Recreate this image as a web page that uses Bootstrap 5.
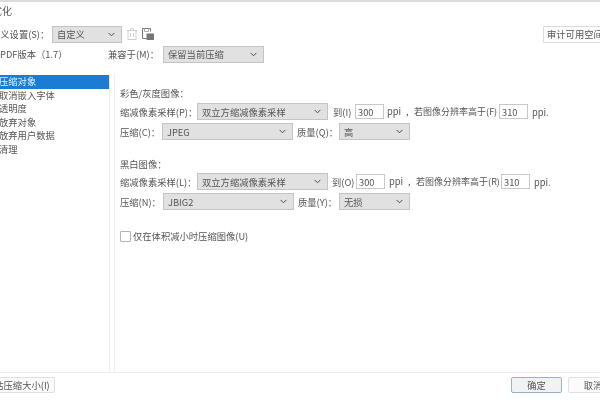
<!DOCTYPE html>
<html lang="zh"><head><meta charset="utf-8"><title>优化</title>
<link href="https://cdn.jsdelivr.net/npm/bootstrap@5.3.0/dist/css/bootstrap.min.css" rel="stylesheet">
<style>
html,body{margin:0;width:600px;height:400px;overflow:hidden;background:#fff}
body{font:9.3px/14px "Noto Sans CJK SC","Liberation Sans",sans-serif;color:#555}
.dlg{width:600px;height:400px;overflow:hidden;filter:blur(.55px)}
.topline{height:2px;background:#dcdcdc}
.ttl{height:15px;margin-left:-8px;padding-top:2px;font-size:10px}
.r1{height:18px;margin-top:8px}
.r2{height:16px;margin-top:3px}
.lb1{width:61px;margin-left:-9px;white-space:nowrap;flex:none}
.sel{appearance:none;display:block;flex:none;margin:0;padding:0 18px 0 4px;height:17px;min-height:0;font:inherit;line-height:14px;color:#555;background-color:#e1e1e1;background-size:9px 7px;background-position:right 5px center;border:1px solid #c4c4c4;border-radius:0;opacity:1}
.w70{width:70px}.w101{width:101px}.w131{width:131px}.w71{width:71px}
.ic1{margin-left:5px}.ic2{margin-left:5px}
.audit{margin-left:auto;width:70px;height:17px;margin-right:-13px;padding:0 0 0 3px;font-size:9.3px;line-height:14px;color:#555;background:#fdfdfd;border:1px solid #dcdcdc;border-radius:1px;white-space:nowrap;overflow:hidden;text-align:left;flex:none}
.ver{width:111px;margin-left:-3px;padding-left:3px;flex:none;white-space:nowrap;overflow:hidden}
.compat{width:55px;flex:none;white-space:nowrap}
.mainp{height:298px;margin-top:12px}
.leftp{width:110px;flex:none;border-right:1px solid #ededed;padding-top:1px}
.leftp .it{height:13.5px;line-height:13.5px;margin-left:-1px;white-space:nowrap;overflow:hidden}
.leftp .it.sel-it{background:#1b7cd3;color:#e8f2fb;margin-left:0;text-indent:-1px}
.rightp{margin-left:4px;width:486px;flex:none;border-left:1px solid #eee;padding:12px 0 0 5px}
.hd{height:14px;line-height:14px}
.fr{height:17px;margin-top:3px}
.fr.tight{margin-top:2px}
.lab{flex:none;white-space:nowrap}
.l77{width:77px}.l42{width:42px}.l43{width:43px}
.q{width:46px;padding-left:4px}
.q2{width:45px;padding-left:4px}
.to{width:27px;padding-left:5px}
.to2{width:28px;padding-left:4px}
.num{flex:none;width:29px;height:15px;padding:0 0 0 2px;font:inherit;line-height:13px;color:#555;background:#fff;border:1px solid #c8c8c8;border-radius:0;min-height:0}
.ppi{flex:none;width:115px;padding-left:3px;white-space:nowrap}
.ppi3{flex:none;width:116px;padding-left:4px;white-space:nowrap}
.cm{display:inline-block;width:13px;padding-left:5px}
.cn{font-size:9px}
.ppi2{padding-left:4px;white-space:nowrap}
.gap1{margin-top:17px}
.chk{margin-top:19px;height:14px}
.bx{flex:none;width:11px;height:11px;margin:0 2px 0 0;padding:0;border:1px solid #b4b4b4;border-radius:1px;background:#fff;appearance:none}
.foot{height:28px;border-top:1px solid #ededed;padding-top:4px}
.fb{height:16px;padding:0;font-size:9.3px;line-height:14px;color:#555;background:#fbfbfb;border:1px solid #e0e0e0;border-radius:2px;white-space:nowrap}
.est{width:66px;margin-left:-11px;text-align:center}
.ok{width:51px;margin-left:auto;background:#f2f2f2;border:1px solid #8fb4cc}
.cancel{width:50px;margin-left:6px;margin-right:-18px}
</style></head>
<body>
<div class="dlg">
 <div class="topline"></div>
 <div class="ttl">优化</div>
 <div class="d-flex align-items-center r1">
  <span class="lb1">定义设置(S)：</span>
  <select class="form-select sel w70"><option>自定义</option></select>
  <svg class="ic1" width="10" height="12" viewBox="0 0 10 12" fill="none" stroke="#cfcfcf"><path d="M0 2.500h10M3.500 2.500V.5h3v2M1 2.500v9h8v-9M3.500 5v4M6.500 5v4"/></svg>
  <svg class="ic2" width="12" height="12" viewBox="0 0 12 12" fill="none" stroke="#777"><path d="M.5.5h8v3M.5.5v10h4"/><rect x="5" y="6" width="6.500" height="5.500" fill="#777"/><path d="M2.500.5v3h4v-3" stroke="#aaa"/></svg>
  <button type="button" class="btn audit">审计可用空间</button>
 </div>
 <div class="d-flex align-items-center r2">
  <span class="ver">PDF版本（1.7）</span>
  <span class="compat">兼容于(M)：</span>
  <select class="form-select sel w101"><option>保留当前压缩</option></select>
 </div>
 <div class="d-flex mainp">
  <div class="leftp">
   <div class="it sel-it">压缩对象</div>
   <div class="it">取消嵌入字体</div>
   <div class="it">透明度</div>
   <div class="it">放弃对象</div>
   <div class="it">放弃用户数据</div>
   <div class="it">清理</div>
  </div>
  <div class="rightp">
   <div class="hd">彩色/灰度图像：</div>
   <div class="d-flex align-items-center fr">
    <span class="lab l77">缩减像素采样(P)：</span>
    <select class="form-select sel w131"><option>双立方缩减像素采样</option></select>
    <span class="lab to">到(I)</span><input class="form-control num" value="300">
    <span class="ppi">ppi<span class="cm">,</span><span class="cn">若图像分辨率高于(F)</span></span><input class="form-control num" value="310"><span class="ppi2">ppi.</span>
   </div>
   <div class="d-flex align-items-center fr">
    <span class="lab l42">压缩(C)：</span>
    <select class="form-select sel w131"><option>JPEG</option></select>
    <span class="lab q">质量(Q)：</span>
    <select class="form-select sel w71"><option>高</option></select>
   </div>
   <div class="hd gap1">黑白图像：</div>
   <div class="d-flex align-items-center fr tight">
    <span class="lab l77">缩减像素采样(L)：</span>
    <select class="form-select sel w131"><option>双立方缩减像素采样</option></select>
    <span class="lab to2">到(O)</span><input class="form-control num" value="300">
    <span class="ppi3">ppi<span class="cm">,</span><span class="cn">若图像分辨率高于(R)</span></span><input class="form-control num" value="310"><span class="ppi2">ppi.</span>
   </div>
   <div class="d-flex align-items-center fr">
    <span class="lab l43">压缩(N)：</span>
    <select class="form-select sel w131"><option>JBIG2</option></select>
    <span class="lab q2">质量(Y)：</span>
    <select class="form-select sel w71"><option>无损</option></select>
   </div>
   <div class="d-flex align-items-center chk">
    <input type="checkbox" class="bx"><span>仅在体积减小时压缩图像(U)</span>
   </div>
  </div>
 </div>
 <div class="d-flex align-items-start foot">
  <button type="button" class="btn fb est">估压缩大小(I)</button>
  <button type="button" class="btn fb ok">确定</button>
  <button type="button" class="btn fb cancel">取消</button>
 </div>
</div>
</body></html>
